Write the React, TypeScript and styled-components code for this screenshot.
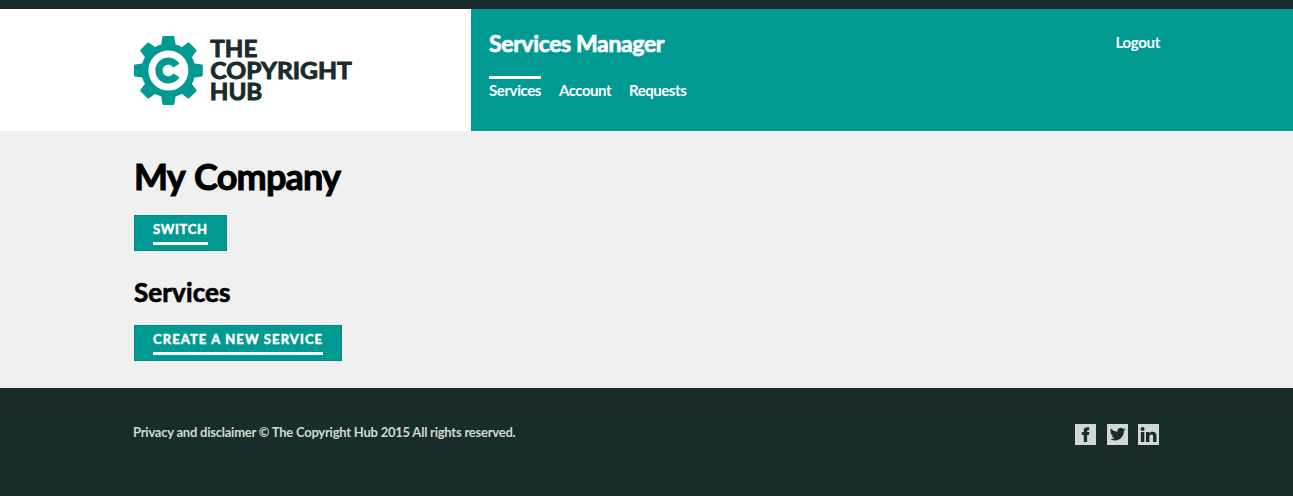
import React from 'react';
import styled, { createGlobalStyle } from 'styled-components';

const teal = '#009a93';
const dark = '#182d2b';

const GlobalStyle = createGlobalStyle`
  * { box-sizing: border-box; }
  body {
    margin: 0;
    background: ${dark};
    color: #000;
    font-family: Lato, "Noto Sans", sans-serif;
  }
  h1, h2, p { margin: 0; font-weight: 700; white-space: nowrap; }
  a { color: inherit; text-decoration: none; white-space: nowrap; }
`;

const Header = styled.header`
  display: flex;
  height: 131px;
  border-top: 9px solid ${dark};
  background: #fff;
`;

const Brand = styled.a`
  flex: 0 0 471px;
  padding: 26px 0 0 133px;
  svg { display: block; }
`;

const Banner = styled.div`
  flex: 1;
  display: flex;
  justify-content: space-between;
  padding: 19px 133px 0 18px;
  background: ${teal};
  color: #fff;
`;

const AppTitle = styled.p`
  height: 48px;
  font-size: 23px;
  line-height: 30px;
  letter-spacing: -0.36px;
  -webkit-text-stroke: 0.7px currentColor;
`;

const Nav = styled.nav`
  display: flex;
  gap: 18px;
`;

const NavLink = styled.a<{ $active?: boolean; $spacing: number }>`
  border-top: 3px solid ${p => (p.$active ? '#fff' : 'transparent')};
  padding-top: 1px;
  font-size: 15px;
  line-height: 20px;
  font-weight: 700;
  letter-spacing: ${p => p.$spacing}px;
`;

const Logout = styled.a`
  padding-top: 4px;
  font-size: 15px;
  line-height: 20px;
  font-weight: 700;
  letter-spacing: -0.3px;
`;

const Main = styled.main`
  height: 257px;
  padding: 22px 134px 0;
  background: #f0f0f0;
`;

const Company = styled.h1`
  height: 62px;
  font-size: 36px;
  line-height: 47px;
  letter-spacing: -0.8px;
  word-spacing: 2px;
  -webkit-text-stroke: 1px currentColor;
`;

const Section = styled.h2`
  height: 50px;
  margin-top: 24px;
  font-size: 26px;
  line-height: 34px;
  letter-spacing: 0.1px;
  -webkit-text-stroke: 0.7px currentColor;
`;

const Button = styled.a<{ $spacing: number }>`
  display: block;
  width: fit-content;
  height: 36px;
  padding: 4px 18px 0;
  border: 1px solid #008a82;
  background: ${teal};
  color: #fff;
  font-size: 13px;
  line-height: 18px;
  font-weight: 700;
  letter-spacing: ${p => p.$spacing}px;
  text-transform: uppercase;
  -webkit-text-stroke: 0.5px currentColor;
  span { display: block; height: 25px; border-bottom: 3px solid #fff; }
`;

const Footer = styled.footer`
  display: flex;
  justify-content: space-between;
  align-items: flex-start;
  height: 108px;
  padding: 36px 134px 0 133px;
  background: ${dark};
  color: #d2d7d7;
`;

const Legal = styled.p`
  margin-top: -1px;
  font-size: 13px;
  line-height: 18px;
  letter-spacing: -0.235px;
`;

const Social = styled.div`
  display: flex;
  gap: 10.5px;
  svg { display: block; width: 21px; height: 21px; }
`;

const teeth = [0, 45, 90, 135, 180, 225, 270, 315];

const Logo = () => (
  <svg width="222" height="72" viewBox="0 0 222 72" role="img">
    <g transform="translate(35.4 35.5)">
      {teeth.map(a => (
        <path key={a} transform={`rotate(${a})`} fill={teal}
          d="M-7.3 -25 L-6 -33.4 Q-5.8 -34.4 -4.8 -34.4 H4.8 Q5.8 -34.4 6 -33.4 L7.3 -25Z" />
      ))}
      <circle r="23.5" fill="none" stroke={teal} strokeWidth="7" />
      <path d="M8 -4.9 A9.4 9.4 0 1 0 8 4.9" fill="none" stroke={teal} strokeWidth="7.2" />
    </g>
    <g fill={dark} stroke={dark} strokeWidth="0.9" fontFamily="Lato, sans-serif" fontWeight="700" fontSize="22.2">
      <text x="77.3" y="22.4" textLength="47" lengthAdjust="spacingAndGlyphs">THE</text>
      <text x="77.3" y="43.9" textLength="141.5" lengthAdjust="spacingAndGlyphs">COPYRIGHT</text>
      <text x="76.8" y="65.4" textLength="52.5" lengthAdjust="spacingAndGlyphs">HUB</text>
    </g>
  </svg>
);

const Facebook = () => (
  <svg viewBox="0 0 21 21">
    <rect width="21" height="21" fill="#d2d7d7" />
    <path fill={dark} d="M8.8 18V11.1H6.8V8.1h2V6.7C8.8 4.2 10 3.2 12.3 3.2h1.9v3h-1.1c-.8 0-1 .3-1 1v.9h2.2l-.3 3h-1.9V18z" />
  </svg>
);

const Twitter = () => (
  <svg viewBox="0 0 21 21">
    <rect width="21" height="21" fill="#d2d7d7" />
    <path fill={dark} transform="translate(2.8 2.4) scale(.65)"
      d="M23.95 4.57a10 10 0 0 1-2.82.77 4.96 4.96 0 0 0 2.16-2.72c-.95.55-2 .95-3.13 1.18a4.92 4.92 0 0 0-8.38 4.48A13.93 13.93 0 0 1 1.64 3.16a4.92 4.92 0 0 0 1.52 6.57 4.9 4.9 0 0 1-2.23-.61v.06a4.92 4.92 0 0 0 3.95 4.83 5 5 0 0 1-2.21.08 4.94 4.94 0 0 0 4.6 3.42A9.87 9.87 0 0 1 0 19.54a13.99 13.99 0 0 0 7.56 2.21c9.05 0 14-7.5 14-13.98 0-.21 0-.42-.02-.63a9.94 9.94 0 0 0 2.46-2.55z" />
  </svg>
);

const LinkedIn = () => (
  <svg viewBox="0 0 21 21">
    <rect width="21" height="21" fill="#d2d7d7" />
    <circle cx="4.6" cy="4.9" r="2" fill={dark} />
    <path fill={dark} d="M2.9 8h3.4v10H2.9zM8 8h3.3v1.4c.6-1 1.7-1.7 3.2-1.7 3 0 4 1.9 4 4.7V18h-3.4v-5c0-1.4-.2-2.5-1.7-2.5s-2 1.1-2 2.5v5H8z" />
  </svg>
);

export default function App() {
  return (
    <>
      <GlobalStyle />
      <Header>
        <Brand href="#"><Logo /></Brand>
        <Banner>
          <div>
            <AppTitle>Services Manager</AppTitle>
            <Nav>
              <NavLink href="#" $active $spacing={-0.4}>Services</NavLink>
              <NavLink href="#" $spacing={-0.5}>Account</NavLink>
              <NavLink href="#" $spacing={-0.45}>Requests</NavLink>
            </Nav>
          </div>
          <Logout href="#">Logout</Logout>
        </Banner>
      </Header>
      <Main>
        <Company>My Company</Company>
        <Button href="#" $spacing={0.65}><span>Switch</span></Button>
        <Section>Services</Section>
        <Button href="#" $spacing={1.1}><span>Create a new service</span></Button>
      </Main>
      <Footer>
        <Legal>Privacy and disclaimer © The Copyright Hub 2015 All rights reserved.</Legal>
        <Social><Facebook /><Twitter /><LinkedIn /></Social>
      </Footer>
    </>
  );
}
